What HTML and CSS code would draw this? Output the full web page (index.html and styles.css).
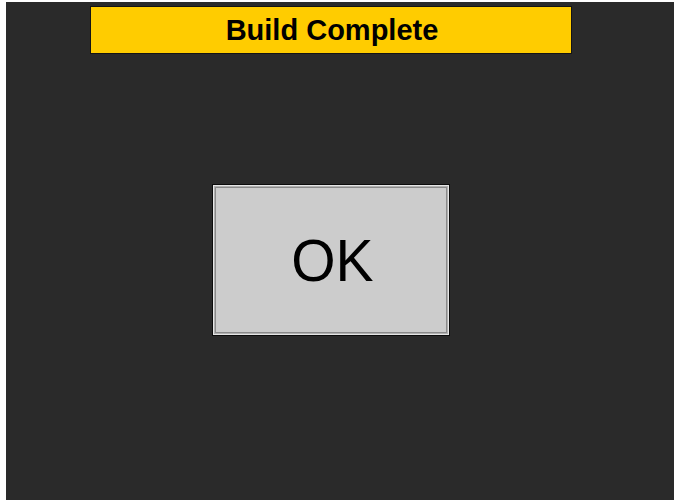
FILE: index.html
```html
<!DOCTYPE html>
<html>
<head>
<meta charset="utf-8">
<link rel="stylesheet" href="styles.css">
</head>
<body>
<div class="panel">
  <div class="title-bar">Build Complete</div>
  <button class="ok-button"><span class="ok-label">OK</span></button>
</div>
</body>
</html>
```
FILE: styles.css
```css
html, body {
  margin: 0;
  padding: 0;
  background: #ffffff;
}
body {
  width: 678px;
  height: 501px;
  overflow: hidden;
}
.panel {
  margin: 2px 4px 0 6px;
  height: 498px;
  background: #2a2a2a;
  display: flex;
  flex-direction: column;
  align-items: flex-start;
  padding-top: 4px;
  box-sizing: border-box;
}
.title-bar {
  margin-left: 84px;
  width: 482px;
  height: 48px;
  box-sizing: border-box;
  background: #ffcc00;
  border: 1px solid #141414;
  display: flex;
  align-items: center;
  justify-content: center;
  font-family: "Liberation Sans", Arial, sans-serif;
  font-weight: bold;
  font-size: 29px;
  color: #000;
  padding-left: 2px;
}
.ok-button {
  margin-top: 130px;
  margin-left: 206px;
  width: 238px;
  height: 152px;
  box-sizing: border-box;
  background: #cccccc;
  border: 1px solid #0c0c0c;
  box-shadow: inset 0 0 0 1px #e6e6e6, inset 0 0 0 2px #b0b0b0, inset 0 0 0 3px #8a8a8a;
  display: flex;
  align-items: center;
  justify-content: center;
  padding: 2px 0 0 0;
  font-family: "Liberation Sans", Arial, sans-serif;
  color: #000;
}
.ok-label {
  display: inline-block;
  font-size: 60px;
  line-height: 1;
  transform: scaleX(0.95);
  margin-left: 2px;
}
```
